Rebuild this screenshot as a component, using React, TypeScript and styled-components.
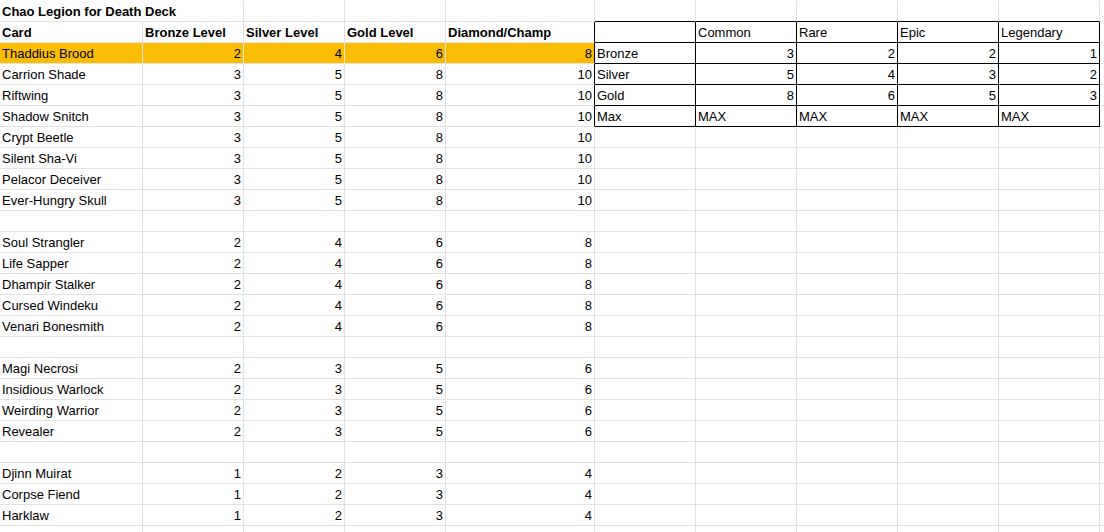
import React from 'react';
import styled, { createGlobalStyle } from 'styled-components';

const Global = createGlobalStyle`
  body { margin: 0; background: #fff; font-family: "Liberation Sans", Arial, sans-serif; }
`;

const COLS = [143, 101, 101, 101, 149, 101, 101, 101, 101, 101, 10];

const Sheet = styled.div`
  display: grid;
  grid-template-columns: ${COLS.map((w) => `${w}px`).join(' ')};
  grid-auto-rows: 21px;
  overflow: hidden;
  height: 531px;
  padding-top: 1px;
`;

const Cell = styled.div<{ $num?: boolean; $bold?: boolean; $hl?: boolean; $br?: boolean; $bb?: boolean; $spill?: boolean }>`
  box-sizing: border-box;
  border-right: 1px solid ${(p) => (p.$br ? '#000' : p.$spill ? 'transparent' : '#e2e2e2')};
  border-bottom: 1px solid ${(p) => (p.$bb ? '#000' : '#e2e2e2')};
  background: ${(p) => (p.$hl ? '#fbbc04' : p.$spill ? 'transparent' : '#fff')};
  font-size: 13px;
  font-weight: ${(p) => (p.$bold ? 700 : 400)};
  color: #000;
  padding: 1px 2px 0;
  line-height: 20px;
  white-space: nowrap;
  overflow: ${(p) => (p.$spill ? 'visible' : 'hidden')};
  position: ${(p) => (p.$spill ? 'relative' : 'static')};
  z-index: ${(p) => (p.$spill ? 1 : 'auto')};
  text-align: ${(p) => (p.$num ? 'right' : 'left')};
`;

type Row = (string | number)[];

const left: Row[] = [
  ['Chao Legion for Death Deck'],
  ['Card', 'Bronze Level', 'Silver Level', 'Gold Level', 'Diamond/Champ'],
  ['Thaddius Brood', 2, 4, 6, 8],
  ['Carrion Shade', 3, 5, 8, 10],
  ['Riftwing', 3, 5, 8, 10],
  ['Shadow Snitch', 3, 5, 8, 10],
  ['Crypt Beetle', 3, 5, 8, 10],
  ['Silent Sha-Vi', 3, 5, 8, 10],
  ['Pelacor Deceiver', 3, 5, 8, 10],
  ['Ever-Hungry Skull', 3, 5, 8, 10],
  [],
  ['Soul Strangler', 2, 4, 6, 8],
  ['Life Sapper', 2, 4, 6, 8],
  ['Dhampir Stalker', 2, 4, 6, 8],
  ['Cursed Windeku', 2, 4, 6, 8],
  ['Venari Bonesmith', 2, 4, 6, 8],
  [],
  ['Magi Necrosi', 2, 3, 5, 6],
  ['Insidious Warlock', 2, 3, 5, 6],
  ['Weirding Warrior', 2, 3, 5, 6],
  ['Revealer', 2, 3, 5, 6],
  [],
  ['Djinn Muirat', 1, 2, 3, 4],
  ['Corpse Fiend', 1, 2, 3, 4],
  ['Harklaw', 1, 2, 3, 4],
  [],
];

const right: Record<number, Row> = {
  1: ['', 'Common', 'Rare', 'Epic', 'Legendary'],
  2: ['Bronze', 3, 2, 2, 1],
  3: ['Silver', 5, 4, 3, 2],
  4: ['Gold', 8, 6, 5, 3],
  5: ['Max', 'MAX', 'MAX', 'MAX', 'MAX'],
};

export default function App() {
  return (
    <>
      <Global />
      <Sheet>
        {left.map((row, r) => {
          const cells = [];
          const bold = r < 2;
          const hl = r === 2;
          const boxed = r >= 1 && r <= 5;
          for (let c = 0; c < 5; c++) {
            const v = row[c];
            cells.push(
              <Cell
                key={`l${c}`}
                $num={typeof v === 'number'}
                $bold={bold}
                $hl={hl}
                $br={c === 4 && boxed}
                $spill={r === 0 && c === 0}
              >
                {v ?? ''}
              </Cell>
            );
          }
          const rr = right[r];
          for (let c = 0; c < 5; c++) {
            const v = rr ? rr[c] : '';
            cells.push(
              <Cell key={`r${c}`} $num={typeof v === 'number'} $br={boxed} $bb={r <= 5}>
                {v}
              </Cell>
            );
          }
          cells.push(<Cell key="x" />);
          return <React.Fragment key={r}>{cells}</React.Fragment>;
        })}
      </Sheet>
    </>
  );
}
